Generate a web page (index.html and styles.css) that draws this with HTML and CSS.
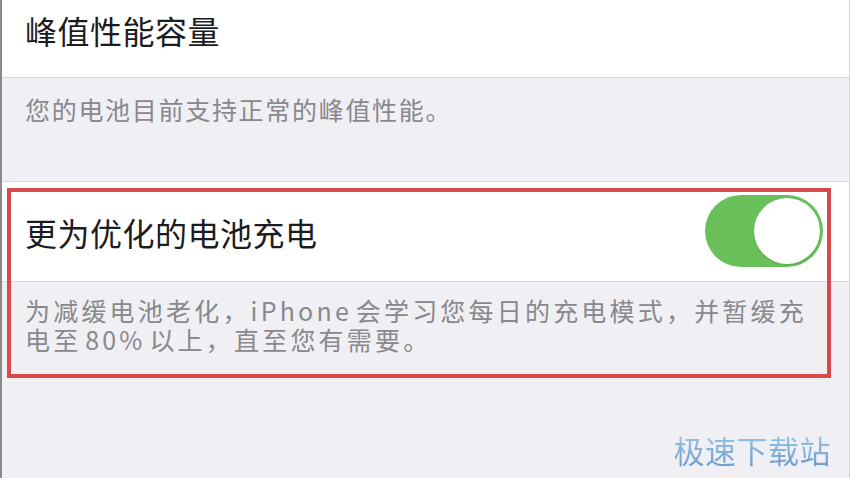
FILE: index.html
```html
<!DOCTYPE html>
<html lang="zh-CN">
<head>
    <meta charset="UTF-8">
    <meta name="viewport" content="width=device-width, initial-scale=1.0">
    <title>电池健康</title>
    <link rel="stylesheet" href="styles.css">
</head>
<body>

<div class="screen">
    <div class="cell">
        <span class="cell-title">峰值性能容量</span>
    </div>
    <div class="footer footer-peak">
        <p>您的电池目前支持正常的峰值性能。</p>
    </div>

    <div class="cell cell-toggle">
        <span class="cell-title">更为优化的电池充电</span>
        <div class="switch on">
            <div class="knob"></div>
        </div>
    </div>
    <div class="footer footer-charge">
        <p>为减缓电池老化，iPhone 会学习您每日的充电模式，并暂缓充<br>电至 80% 以上，直至您有需要。</p>
    </div>

    <!-- annotation box drawn over the setting -->
    <div class="highlight"></div>
    <div class="watermark">极速下载站</div>
</div>

</body>
</html>
```

FILE: styles.css
```css
body {
    margin: 0;
    font-family: "Noto Sans CJK SC", "Noto Sans", sans-serif;
    background-color: #efeff4;
}
.screen {
    position: relative;
    height: 478px;
    overflow: hidden;
    border-left: 2px solid #8a8a8a;
    border-right: 1px solid #d6d6da;
    background-color: #efeff4;
}
.cell {
    display: flex;
    align-items: center;
    justify-content: space-between;
    background-color: #fff;
    border-bottom: 1px solid #d8d8dc;
    padding: 0 23px 0 23px;
}
.cell:first-child {
    height: 77px;
    align-items: flex-start;
}
.cell:first-child .cell-title {
    margin-top: 8px;
}
.cell-toggle {
    height: 99px;
    border-top: 1px solid #dcdce0;
    padding-right: 26px;
}
.cell-title {
    font-size: 32px;
    letter-spacing: 0.5px;
    color: #1c1c1e;
    line-height: 44px;
}
.footer p {
    margin: 0;
    font-size: 25px;
    letter-spacing: 1.7px;
    color: #88888d;
    line-height: 27px;
}
.footer-peak {
    height: 103px;
    padding: 18px 23px 0;
    box-sizing: border-box;
}
.footer-charge {
    padding: 14px 23px 0;
}
.footer-charge p {
    letter-spacing: 3.2px;
    word-spacing: -5px;
    line-height: 29px;
}
.switch {
    width: 118px;
    height: 72px;
    border-radius: 36px;
    background-color: #69c05a;
    position: relative;
    margin-top: -2px;
}
.knob {
    position: absolute;
    right: 3px;
    top: 3px;
    width: 66px;
    height: 66px;
    border-radius: 50%;
    background-color: #fff;
    box-shadow: 0 1px 2px rgba(0, 0, 0, 0.15);
}
.highlight {
    position: absolute;
    left: 5px;
    top: 188px;
    width: 816px;
    height: 182px;
    border: 4px solid #d64a4a;
}
.watermark {
    position: absolute;
    right: 18px;
    top: 427px;
    font-size: 31px;
    letter-spacing: 0.5px;
    background: linear-gradient(#9cd0ee, #6a95c8);
    -webkit-background-clip: text;
    background-clip: text;
    color: transparent;
}
```
